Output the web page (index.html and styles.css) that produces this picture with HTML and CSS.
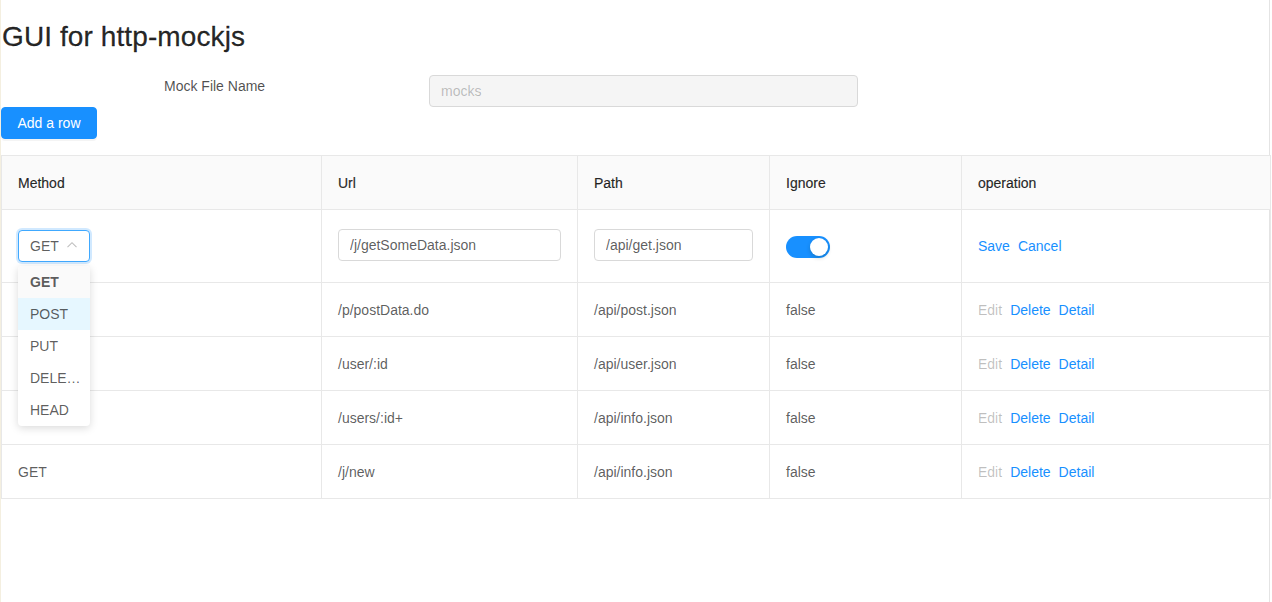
FILE: index.html
```html
<!DOCTYPE html>
<html>
<head>
<meta charset="utf-8">
<title>GUI for http-mockjs</title>
<link rel="stylesheet" href="styles.css">
</head>
<body>
<div class="page">
  <h1 class="title">GUI for http-mockjs</h1>
  <div class="form-row">
    <label class="form-label">Mock File Name</label>
    <input class="input input-disabled" value="mocks" disabled>
  </div>
  <button class="btn-primary">Add a row</button>
  <table class="table">
    <colgroup>
      <col class="c-method"><col class="c-url"><col class="c-path"><col class="c-ignore"><col class="c-op">
    </colgroup>
    <thead>
      <tr><th>Method</th><th>Url</th><th>Path</th><th>Ignore</th><th>operation</th></tr>
    </thead>
    <tbody>
      <tr class="edit-row">
        <td>
          <div class="cell-box">
            <div class="select-wrap">
              <div class="select">
                <span class="select-value">GET</span>
                <svg class="select-arrow" width="12" height="12" viewBox="0 0 12 12"><path d="M1.5 8.2 L6 3.7 L10.5 8.2" fill="none" stroke="#bfbfbf" stroke-width="1.1"/></svg>
              </div>
              <ul class="dropdown">
                <li class="dd-item dd-selected">GET</li>
                <li class="dd-item dd-active">POST</li>
                <li class="dd-item">PUT</li>
                <li class="dd-item">DELETE</li>
                <li class="dd-item">HEAD</li>
              </ul>
            </div>
          </div>
        </td>
        <td><div class="cell-box"><input class="input input-url" value="/j/getSomeData.json"></div></td>
        <td><div class="cell-box"><input class="input input-path" value="/api/get.json"></div></td>
        <td><div class="cell-box"><span class="switch"><span class="knob"></span></span></div></td>
        <td><div class="cell-box ops"><a class="link">Save</a><a class="link">Cancel</a></div></td>
      </tr>
      <tr>
        <td></td><td>/p/postData.do</td><td>/api/post.json</td><td>false</td>
        <td><div class="ops"><span class="disabled">Edit</span><a class="link">Delete</a><a class="link">Detail</a></div></td>
      </tr>
      <tr>
        <td></td><td>/user/:id</td><td>/api/user.json</td><td>false</td>
        <td><div class="ops"><span class="disabled">Edit</span><a class="link">Delete</a><a class="link">Detail</a></div></td>
      </tr>
      <tr>
        <td></td><td>/users/:id+</td><td>/api/info.json</td><td>false</td>
        <td><div class="ops"><span class="disabled">Edit</span><a class="link">Delete</a><a class="link">Detail</a></div></td>
      </tr>
      <tr>
        <td>GET</td><td>/j/new</td><td>/api/info.json</td><td>false</td>
        <td><div class="ops"><span class="disabled">Edit</span><a class="link">Delete</a><a class="link">Detail</a></div></td>
      </tr>
    </tbody>
  </table>
</div>
</body>
</html>
```

FILE: styles.css
```css
* { box-sizing: border-box; }
html, body {
  margin: 0;
  padding: 0;
  background: #fff;
  font-family: "Liberation Sans", Arial, sans-serif;
  font-size: 14px;
  color: rgba(0, 0, 0, 0.65);
}
body { min-height: 602px; }
.page {
  width: 1270px;
  min-height: 602px;
  border-left: 1px solid #f4efe0;
  border-right: 1px solid #e4e4e4;
  position: relative;
}
.title {
  margin: 0;
  padding: 17px 0 0 1px;
  line-height: 40px;
  height: 56px;
  font-size: 28px;
  font-weight: normal;
  color: rgba(0, 0, 0, 0.85);
  -webkit-text-stroke: 0.3px rgba(0, 0, 0, 0.85);
  letter-spacing: 0.1px;
}
.form-row {
  display: flex;
  align-items: center;
  height: 32px;
  margin-top: 19px;
}
.form-label {
  width: 428px;
  padding-left: 163px;
  padding-bottom: 10px;
  color: rgba(0, 0, 0, 0.7);
}
.input {
  height: 32px;
  padding: 4px 11px;
  border: 1px solid #d9d9d9;
  border-radius: 4px;
  font-family: inherit;
  font-size: 14px;
  color: rgba(0, 0, 0, 0.65);
  background: #fff;
  outline: none;
}
.input-disabled {
  width: 429px;
  background: #f5f5f5;
  color: rgba(0, 0, 0, 0.25);
}
.btn-primary {
  display: block;
  height: 32px;
  width: 96px;
  padding: 0;
  margin: 0;
  border: 1px solid #1890ff;
  border-radius: 4px;
  background: #1890ff;
  color: #fff;
  font-family: inherit;
  font-size: 14px;
  box-shadow: 0 2px 0 rgba(0, 0, 0, 0.045);
}
.table {
  margin-top: 16px;
  width: 1269px;
  border-collapse: collapse;
  table-layout: fixed;
}
.c-method { width: 320px; }
.c-url { width: 256px; }
.c-path { width: 192px; }
.c-ignore { width: 192px; }
.c-op { width: 309px; }
.table th, .table td {
  border: 1px solid #e8e8e8;
  padding: 17px 16px 15px;
  line-height: 21px;
  text-align: left;
  vertical-align: middle;
  white-space: nowrap;
}
.table .edit-row td { padding: 16px; height: 73px; }
.table th {
  background: #fafafa;
  font-weight: normal;
  color: rgba(0, 0, 0, 0.85);
  -webkit-text-stroke: 0.2px rgba(0, 0, 0, 0.85);
}
.table td { height: 54px; }
.cell-box {
  height: 40px;
  display: flex;
  align-items: center;
}
.input-url, .input-path { width: 100%; margin-top: -2px; }
.select-wrap { position: relative; }
.select {
  width: 72px;
  height: 32px;
  border: 1px solid #40a9ff;
  border-radius: 4px;
  box-shadow: 0 0 0 2px rgba(24, 144, 255, 0.2);
  display: flex;
  align-items: center;
  padding: 0 11px;
  justify-content: space-between;
  background: #fff;
}
.select-value { color: rgba(0, 0, 0, 0.65); }
.select-arrow { display: block; margin-top: -2px; }
.dropdown {
  position: absolute;
  top: 36px;
  left: 0;
  width: 72px;
  margin: 0;
  padding: 0;
  list-style: none;
  background: #fff;
  border-radius: 4px;
  box-shadow: 0 2px 8px rgba(0, 0, 0, 0.15);
  z-index: 10;
  overflow: hidden;
}
.dd-item {
  height: 32px;
  line-height: 22px;
  padding: 5px 6px 5px 12px;
  overflow: hidden;
  text-overflow: ellipsis;
  white-space: nowrap;
  color: rgba(0, 0, 0, 0.65);
}
.dd-selected { background: #fafafa; font-weight: bold; }
.dd-active { background: #e6f7ff; }
.switch {
  position: relative;
  display: inline-block;
  width: 44px;
  height: 22px;
  border-radius: 11px;
  background: #1890ff;
  margin-top: 1px;
}
.knob {
  position: absolute;
  top: 2px;
  left: 24px;
  width: 18px;
  height: 18px;
  border-radius: 50%;
  background: #fff;
  box-shadow: 0 2px 4px rgba(0, 35, 11, 0.2);
}
.ops { display: flex; gap: 8px; align-items: center; }
.link { color: #1890ff; text-decoration: none; }
.disabled { color: rgba(0, 0, 0, 0.25); }
```
